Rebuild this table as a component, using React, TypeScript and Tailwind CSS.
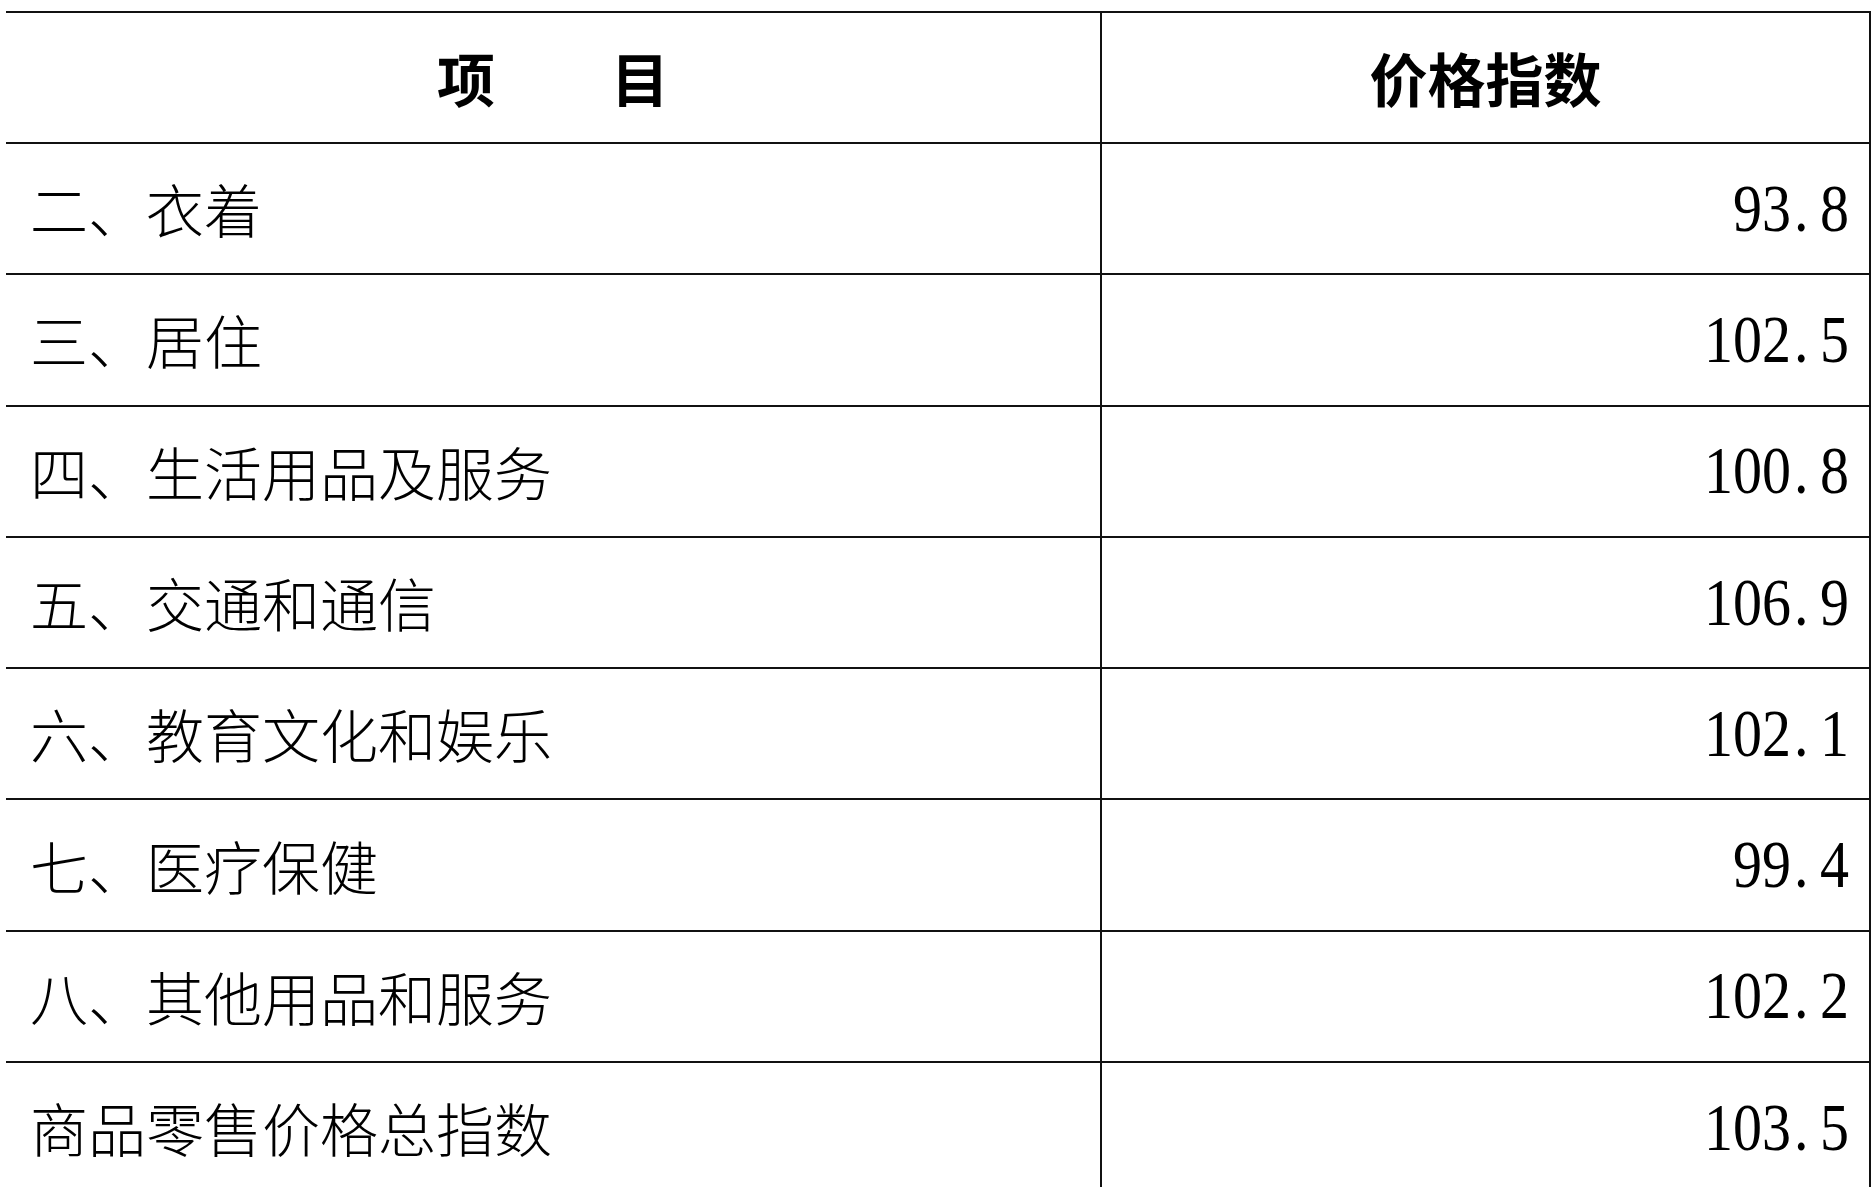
const ROWS: Array<{ name: string; value: string }> = [
  { name: "二、衣着", value: "93.8" },
  { name: "三、居住", value: "102.5" },
  { name: "四、生活用品及服务", value: "100.8" },
  { name: "五、交通和通信", value: "106.9" },
  { name: "六、教育文化和娱乐", value: "102.1" },
  { name: "七、医疗保健", value: "99.4" },
  { name: "八、其他用品和服务", value: "102.2" },
  { name: "商品零售价格总指数", value: "103.5" },
];

const CJK = "font-['Noto_Sans_CJK_SC',sans-serif]";

function Num({ value }: { value: string }) {
  // half-width slots, like the digits of a Song face
  return (
    <span className="font-['Liberation_Serif',serif] text-[58px] leading-none">
      {value.split("").map((ch, i) =>
        ch === "." ? (
          <span key={i} className="inline-block w-[29px] scale-y-115 pl-[3px] text-left">
            .
          </span>
        ) : (
          <span key={i} className="inline-block w-[29px] scale-y-115 text-center">
            {ch}
          </span>
        )
      )}
    </span>
  );
}

export default function App() {
  return (
    <div className="min-h-[1187px] w-[1871px] overflow-hidden bg-white pt-[11px] text-black">
      <div className="ml-[6px] w-[1865px] border-t-2 border-r-2 border-[#111]">
        <div className="grid h-[131px] grid-cols-[1096px_1fr] border-b-2 border-[#111]">
          <div className={`flex items-center justify-center border-r-2 border-[#111] ${CJK} text-[58px] font-bold`}>
            项　　目
          </div>
          <div className={`flex items-center justify-center ${CJK} text-[58px] font-bold`}>价格指数</div>
        </div>
        {ROWS.map((row) => (
          <div key={row.name} className="grid h-[131.3px] grid-cols-[1096px_1fr] border-b-2 border-[#111]">
            <div className={`flex items-center border-r-2 border-[#111] pl-[24px] ${CJK} text-[58px] font-light`}>
              {row.name}
            </div>
            <div className="flex items-center justify-end pr-[20px]">
              <Num value={row.value} />
            </div>
          </div>
        ))}
      </div>
    </div>
  );
}
